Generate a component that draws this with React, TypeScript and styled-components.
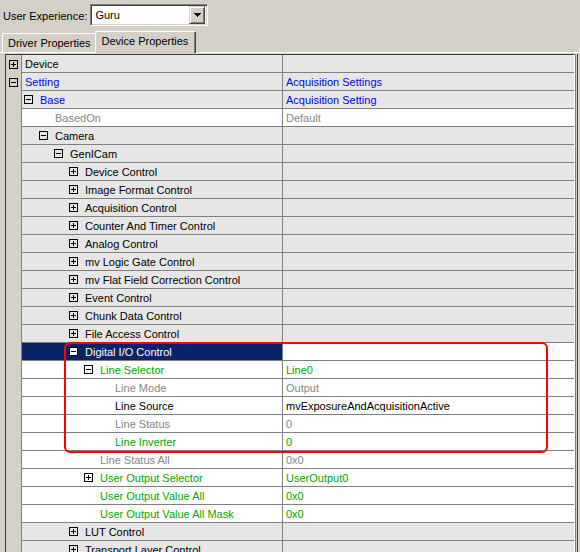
import React from "react";
import styled, { createGlobalStyle, css } from "styled-components";

const GlobalStyle = createGlobalStyle`
  html, body { margin: 0; padding: 0; background: #d4d0c8; }
  body { font-family: "Liberation Sans", Arial, sans-serif; font-size: 11px; color: #000; }
  * { box-sizing: border-box; }
`;

const Window = styled.div`
  width: 580px;
  height: 552px;
  overflow: hidden;
  background: #d4d0c8;
  display: flex;
  flex-direction: column;
`;

const TopBar = styled.div`
  height: 31px;
  flex-shrink: 0;
  display: flex;
  align-items: center;
  padding-left: 3px;
  gap: 3px;
`;

const Label = styled.span`
  line-height: 14px;
`;

const Combo = styled.div`
  width: 118px;
  height: 22px;
  background: #fff;
  border-top: 1px solid #808080;
  border-left: 1px solid #808080;
  border-right: 1px solid #fff;
  border-bottom: 1px solid #fff;
  box-shadow: inset 1px 1px 0 #404040, inset -1px -1px 0 #d4d0c8;
  display: flex;
  align-items: center;
  padding: 2px 2px 2px 4px;
  margin-top: -1px;
`;

const ComboText = styled.span`
  flex: 1;
`;

const DropButton = styled.div`
  width: 16px;
  height: 18px;
  background: #d4d0c8;
  border-top: 1px solid #d4d0c8;
  border-left: 1px solid #d4d0c8;
  border-right: 1px solid #404040;
  border-bottom: 1px solid #404040;
  box-shadow: inset 1px 1px 0 #fff, inset -1px -1px 0 #808080;
  display: flex;
  align-items: center;
  justify-content: center;
`;

const TabStrip = styled.div`
  height: 21px;
  flex-shrink: 0;
  display: flex;
  align-items: flex-end;
  padding-left: 2px;
  position: relative;
  z-index: 1;
`;

const Tab = styled.div<{ $active?: boolean }>`
  height: ${(p) => (p.$active ? 22 : 19)}px;
  padding: 0 ${(p) => (p.$active ? 7 : 5)}px 0 ${(p) => (p.$active ? 6 : 5)}px;
  display: flex;
  align-items: ${(p) => (p.$active ? "flex-start" : "center")};
  padding-top: ${(p) => (p.$active ? 3 : 0)}px;
  border-top: 1px solid #fff;
  border-left: 1px solid #fff;
  border-right: 1px solid #404040;
  border-top-left-radius: 2px;
  border-top-right-radius: 2px;
  box-shadow: inset -1px 0 0 #808080;
  background: #d4d0c8;
  margin-bottom: ${(p) => (p.$active ? -1 : 0)}px;
  ${(p) =>
    p.$active
      ? css`
          margin-left: -1px;
        `
      : css`
          border-right: none;
          box-shadow: none;
        `}
`;

const Panel = styled.div`
  flex: 1;
  min-height: 0;
  overflow: hidden;
  border-top: 1px solid #fff;
  padding-top: 1px;
  padding-left: 5px;
  padding-right: 2px;
  display: flex;
  flex-direction: column;
`;

const Grid = styled.div`
  position: relative;
  border-top: 1px solid #404040;
  border-left: 1px solid #404040;
  border-right: 1px solid #fff;
  flex: 1;
  display: flex;
  flex-direction: column;
  background: #d4d0c8;
  box-shadow: 1px 0 0 #808080, 2px 0 0 #d4d0c8, 3px 0 0 #404040;
  margin-right: 3px;
`;

const Row = styled.div`
  display: flex;
  height: 18px;
  flex-shrink: 0;
`;

const Gutter = styled.div`
  width: 16px;
  flex-shrink: 0;
  border-right: 1px solid #808080;
  display: flex;
  align-items: center;
  padding-left: 3px;
`;

type Tone = "normal" | "blue" | "green" | "gray" | "selected";
type Bg = "gray" | "white" | "selected";

const toneColor: Record<Tone, string> = {
  normal: "#000",
  blue: "#0000ff",
  green: "#00aa00",
  gray: "#858585",
  selected: "#fff",
};

const bgColor: Record<Bg, string> = {
  gray: "#e6e6e6",
  white: "#fff",
  selected: "#0a246a",
};

const NameCell = styled.div<{ $pad: number; $bg: Bg; $tone: Tone }>`
  width: 261px;
  flex-shrink: 0;
  border-right: 1px solid #808080;
  border-bottom: 1px solid #808080;
  background: ${(p) => bgColor[p.$bg]};
  color: ${(p) => toneColor[p.$tone]};
  padding-left: ${(p) => p.$pad}px;
  padding-top: 1px;
  display: flex;
  align-items: center;
  white-space: nowrap;
  line-height: 16px;
`;

const ValueCell = styled.div<{ $bg: Bg; $tone: Tone }>`
  flex: 1;
  border-bottom: 1px solid #808080;
  background: ${(p) => bgColor[p.$bg]};
  color: ${(p) => toneColor[p.$tone]};
  padding-left: 3px;
  padding-top: 1px;
  display: flex;
  align-items: center;
  white-space: nowrap;
  line-height: 16px;
`;

const Toggle = styled.span`
  width: 9px;
  height: 9px;
  flex-shrink: 0;
  margin-right: 7px;
  margin-top: -1px;
  display: inline-flex;
  svg {
    display: block;
  }
`;

const Highlight = styled.div`
  position: absolute;
  left: 58px;
  top: 287px;
  width: 484px;
  height: 111px;
  border: 2px solid #ff0000;
  border-radius: 6px;
  pointer-events: none;
`;

const ToggleIcon: React.FC<{ open: boolean; inverse?: boolean }> = ({ open, inverse }) => {
  const bg = inverse ? "#fff" : "none";
  return (
    <svg width="9" height="9" viewBox="0 0 9 9" shapeRendering="crispEdges">
      <rect x="0.5" y="0.5" width="8" height="8" fill={bg} stroke="#000" strokeWidth="1" />
      <line x1="2" y1="4.5" x2="7" y2="4.5" stroke="#000" strokeWidth="1" />
      {!open && <line x1="4.5" y1="2" x2="4.5" y2="7" stroke="#000" strokeWidth="1" />}
    </svg>
  );
};

type Item = {
  name: string;
  value?: string;
  level: number;
  toggle?: "open" | "closed";
  tone: Tone;
  bg: Bg;
  valueBg?: Bg;
};

const items: Item[] = [
  { name: "Device", level: 0, toggle: "closed", tone: "normal", bg: "gray" },
  { name: "Setting", value: "Acquisition Settings", level: 0, toggle: "open", tone: "blue", bg: "gray" },
  { name: "Base", value: "Acquisition Setting", level: 1, toggle: "open", tone: "blue", bg: "gray" },
  { name: "BasedOn", value: "Default", level: 2, tone: "gray", bg: "white" },
  { name: "Camera", level: 2, toggle: "open", tone: "normal", bg: "gray" },
  { name: "GenICam", level: 3, toggle: "open", tone: "normal", bg: "gray" },
  { name: "Device Control", level: 4, toggle: "closed", tone: "normal", bg: "gray" },
  { name: "Image Format Control", level: 4, toggle: "closed", tone: "normal", bg: "gray" },
  { name: "Acquisition Control", level: 4, toggle: "closed", tone: "normal", bg: "gray" },
  { name: "Counter And Timer Control", level: 4, toggle: "closed", tone: "normal", bg: "gray" },
  { name: "Analog Control", level: 4, toggle: "closed", tone: "normal", bg: "gray" },
  { name: "mv Logic Gate Control", level: 4, toggle: "closed", tone: "normal", bg: "gray" },
  { name: "mv Flat Field Correction Control", level: 4, toggle: "closed", tone: "normal", bg: "gray" },
  { name: "Event Control", level: 4, toggle: "closed", tone: "normal", bg: "gray" },
  { name: "Chunk Data Control", level: 4, toggle: "closed", tone: "normal", bg: "gray" },
  { name: "File Access Control", level: 4, toggle: "closed", tone: "normal", bg: "gray" },
  { name: "Digital I/O Control", level: 4, toggle: "open", tone: "selected", bg: "selected", valueBg: "white" },
  { name: "Line Selector", value: "Line0", level: 5, toggle: "open", tone: "green", bg: "white" },
  { name: "Line Mode", value: "Output", level: 6, tone: "gray", bg: "white" },
  { name: "Line Source", value: "mvExposureAndAcquisitionActive", level: 6, tone: "normal", bg: "white" },
  { name: "Line Status", value: "0", level: 6, tone: "gray", bg: "white" },
  { name: "Line Inverter", value: "0", level: 6, tone: "green", bg: "white" },
  { name: "Line Status All", value: "0x0", level: 5, tone: "gray", bg: "white" },
  { name: "User Output Selector", value: "UserOutput0", level: 5, toggle: "closed", tone: "green", bg: "white" },
  { name: "User Output Value All", value: "0x0", level: 5, tone: "green", bg: "white" },
  { name: "User Output Value All Mask", value: "0x0", level: 5, tone: "green", bg: "white" },
  { name: "LUT Control", level: 4, toggle: "closed", tone: "normal", bg: "gray" },
  { name: "Transport Layer Control", level: 4, toggle: "closed", tone: "normal", bg: "gray" },
];

const PropRow: React.FC<{ item: Item }> = ({ item }) => {
  const { level, toggle } = item;
  const inGutter = level === 0 && toggle;
  const inCell = level > 0 && toggle;
  const pad = inCell ? 15 * level - 13 : 15 * level + 3;
  const valueTone: Tone = item.tone === "selected" ? "normal" : item.tone;
  return (
    <Row>
      <Gutter>{inGutter && <ToggleIcon open={toggle === "open"} />}</Gutter>
      <NameCell $pad={pad} $bg={item.bg} $tone={item.tone}>
        {inCell && (
          <Toggle>
            <ToggleIcon open={toggle === "open"} inverse={item.bg === "selected"} />
          </Toggle>
        )}
        {item.name}
      </NameCell>
      <ValueCell $bg={item.valueBg ?? item.bg} $tone={valueTone}>
        {item.value ?? ""}
      </ValueCell>
    </Row>
  );
};

export default function App() {
  return (
    <Window>
      <GlobalStyle />
      <TopBar>
        <Label>User Experience:</Label>
        <Combo>
          <ComboText>Guru</ComboText>
          <DropButton>
            <svg width="7" height="4" viewBox="0 0 7 4" shapeRendering="crispEdges">
              <path d="M0 0H7L3.5 4Z" fill="#000" />
            </svg>
          </DropButton>
        </Combo>
      </TopBar>
      <TabStrip>
        <Tab>Driver Properties</Tab>
        <Tab $active>Device Properties</Tab>
      </TabStrip>
      <Panel>
        <Grid>
          {items.map((it) => (
            <PropRow key={it.name} item={it} />
          ))}
          <Highlight />
        </Grid>
      </Panel>
    </Window>
  );
}
